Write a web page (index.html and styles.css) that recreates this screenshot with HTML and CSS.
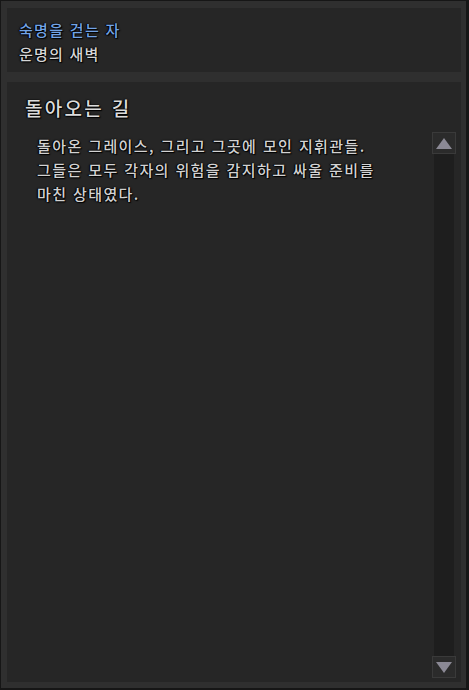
FILE: index.html
```html
<!DOCTYPE html>
<html lang="ko">
<head>
  <meta charset="UTF-8">
  <meta name="viewport" content="width=device-width, initial-scale=1.0">
  <title>돌아오는 길</title>
  <link rel="stylesheet" href="styles.css">
</head>
<body>
  <div class="frame">
    <div class="quest-head">
      <p class="quest-title">숙명을 걷는 자</p>
      <p class="quest-chapter">운명의 새벽</p>
    </div>
    <div class="quest-body">
      <h2 class="step-title">돌아오는 길</h2>
      <div class="scroll-area">
        <p class="step-text">돌아온 그레이스, 그리고 그곳에 모인 지휘관들.<br>그들은 모두 각자의 위험을 감지하고 싸울 준비를<br>마친 상태였다.</p>
        <div class="scrollbar">
          <div class="scroll-btn">
            <svg width="16" height="11" viewBox="0 0 16 11"><polygon points="8,0 16,11 0,11" fill="#8b8995"/></svg>
          </div>
          <div class="scroll-track"></div>
          <div class="scroll-btn">
            <svg width="16" height="11" viewBox="0 0 16 11"><polygon points="0,0 16,0 8,11" fill="#8b8995"/></svg>
          </div>
        </div>
      </div>
    </div>
  </div>
</body>
</html>
```

FILE: styles.css
```css
html, body {
  margin: 0;
  background: #111;
}
body {
  font-family: "Noto Sans CJK KR", "Noto Sans", sans-serif;
  color: #d4d4d4;
}
p, h2 {
  margin: 0;
}
.frame {
  box-sizing: border-box;
  width: 469px;
  height: 690px;
  display: flex;
  flex-direction: column;
  gap: 10px;
  padding: 7px 5px 6px 6px;
  background: #2f2f2f;
  border-style: solid;
  border-color: #161616;
  border-width: 1px 3px 2px 1px;
}
.quest-head {
  height: 64px;
  box-sizing: border-box;
  padding: 10px 12px 0;
  background: #262626;
  font-weight: 500;
  text-shadow: 1px 1px 1px #000, -1px 0 1px #000, 0 0 2px #000;
}
.quest-title {
  font-size: 15px;
  line-height: 24px;
  letter-spacing: 1.3px;
  color: #73a4e6;
}
.quest-chapter {
  font-size: 15px;
  line-height: 24px;
  letter-spacing: 1.2px;
  color: #d6d6d6;
}
.quest-body {
  flex: 1;
  display: flex;
  flex-direction: column;
  background: #262626;
  padding: 0 5px 4px 18px;
  min-height: 0;
}
.step-title {
  font-size: 19px;
  font-weight: 500;
  line-height: 24px;
  letter-spacing: 2.3px;
  padding: 14px 0 12px;
  color: #dcdcdc;
  text-shadow: 1px 1px 1px #000, -1px 0 1px #000, 0 0 2px #000;
}
.scroll-area {
  flex: 1;
  display: flex;
  min-height: 0;
}
.step-text {
  flex: 1;
  padding: 2px 0 0 12px;
  font-size: 15px;
  font-weight: 500;
  line-height: 24px;
  letter-spacing: 1.4px;
  color: #d2d2d2;
  text-shadow: 1px 1px 1px #000, -1px 0 1px #000, 0 0 2px #000;
}
.scrollbar {
  width: 24px;
  display: flex;
  flex-direction: column;
  align-items: center;
}
.scroll-btn {
  box-sizing: border-box;
  width: 24px;
  height: 22px;
  display: flex;
  justify-content: center;
  align-items: center;
  background: #2b2b2b;
  border: 1px solid #3a3a3a;
}
.scroll-track {
  flex: 1;
  width: 20px;
  background: #1e1e1e;
}
```
